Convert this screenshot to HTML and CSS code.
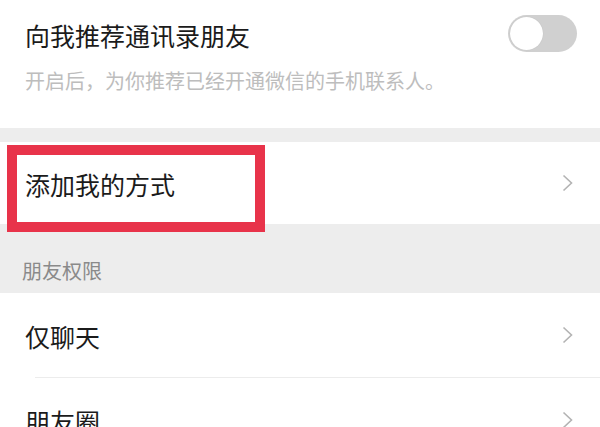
FILE: index.html
```html
<!DOCTYPE html>
<html lang="zh-CN">
<head>
<meta charset="utf-8">
<link rel="stylesheet" href="styles.css">
</head>
<body>
<div class="page">
  <section class="card top">
    <div class="top-row">
      <div class="title">向我推荐通讯录朋友</div>
      <div class="toggle"><span class="knob"></span></div>
    </div>
    <div class="subtitle">开启后，为你推荐已经开通微信的手机联系人。</div>
  </section>
  <div class="gap"></div>
  <section class="card">
    <div class="row highlight">
      <span class="label">添加我的方式</span>
      <svg class="chev" width="11" height="18" viewBox="0 0 11 18"><polyline points="1.5,1.5 9.5,9 1.5,16.5" fill="none" stroke="#b3b3b3" stroke-width="1.6"/></svg>
      <span class="mark"></span>
    </div>
  </section>
  <div class="section-head">朋友权限</div>
  <section class="card">
    <div class="row">
      <span class="label">仅聊天</span>
      <svg class="chev" width="11" height="18" viewBox="0 0 11 18"><polyline points="1.5,1.5 9.5,9 1.5,16.5" fill="none" stroke="#b3b3b3" stroke-width="1.6"/></svg>
    </div>
    <div class="divider"></div>
    <div class="row">
      <span class="label">朋友圈</span>
      <svg class="chev" width="11" height="18" viewBox="0 0 11 18"><polyline points="1.5,1.5 9.5,9 1.5,16.5" fill="none" stroke="#b3b3b3" stroke-width="1.6"/></svg>
    </div>
  </section>
</div>
</body>
</html>
```
FILE: styles.css
```css
html, body {
  margin: 0;
  padding: 0;
  background: #ededed;
}
body {
  font-family: "Noto Sans CJK SC", "Noto Sans", sans-serif;
  width: 600px;
  height: 427px;
  overflow: hidden;
}
.page {
  display: flex;
  flex-direction: column;
}
.card {
  background: #ffffff;
}
.top {
  padding: 20px 23px 33px 25px;
}
.top-row {
  display: flex;
  align-items: center;
  justify-content: space-between;
  height: 30px;
}
.title {
  font-size: 25px;
  line-height: 30px;
  color: #1b1b1b;
}
.toggle {
  width: 69px;
  height: 37px;
  border-radius: 19px;
  background: #d0d0d0;
  box-sizing: border-box;
  padding: 2px;
  display: flex;
  align-items: center;
  margin-top: -3px;
}
.knob {
  width: 33px;
  height: 33px;
  border-radius: 50%;
  background: #ffffff;
  box-shadow: 0 0 1px rgba(0,0,0,0.15);
}
.subtitle {
  margin-top: 17px;
  font-size: 20px;
  line-height: 28px;
  color: #bdbdbd;
}
.gap {
  height: 14px;
}
.row {
  position: relative;
  height: 82px;
  display: flex;
  align-items: center;
  justify-content: space-between;
  padding: 0 27px 0 25px;
}
.label {
  font-size: 25px;
  line-height: 30px;
  color: #1b1b1b;
  margin-top: 2px;
}
.chev {
  display: block;
}
.mark {
  position: absolute;
  left: 7px;
  top: 3px;
  width: 258px;
  height: 87px;
  box-sizing: border-box;
  border: 10px solid #e8334a;
  z-index: 2;
}
.section-head {
  padding: 33px 25px 8px 22px;
  font-size: 20px;
  line-height: 28px;
  color: #8a8a8a;
}
.card .row + .divider + .row,
.card .row:first-child:not(.highlight) {
  height: 84px;
}
.divider {
  height: 1px;
  margin-left: 35px;
  background: #ececec;
}
```
